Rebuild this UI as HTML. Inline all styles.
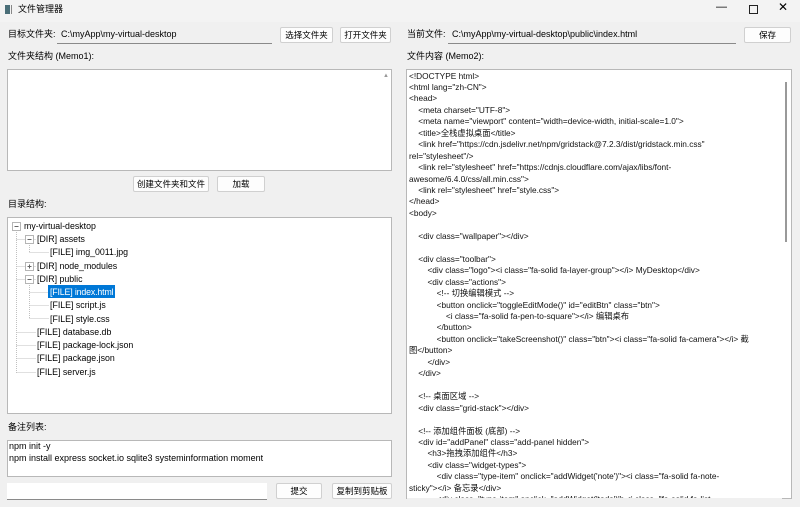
<!DOCTYPE html>
<html><head><meta charset="utf-8"><style>
*{margin:0;padding:0;box-sizing:border-box}
body{width:800px;height:507px;overflow:hidden;background:#f0f0f0;font-family:"Liberation Sans","Noto Sans CJK SC",sans-serif;font-size:9px;color:#000;position:relative}
.a{position:absolute;white-space:pre;line-height:11px}
.edit{position:absolute;background:#f0f0f0;border-bottom:1px solid #8a8a8a;}
.btn{position:absolute;background:#fdfdfd;border:1px solid #d0d0d0;border-radius:2px;text-align:center;line-height:14px;font-size:8.5px}
.box{position:absolute;background:#fff;border:1px solid #b8b8b8}
#code{position:absolute;left:409px;top:70.5px;font-size:8.3px;line-height:11.45px;white-space:pre;color:#111}
.t{position:absolute;font-size:8.8px;white-space:pre;line-height:12px}
</style></head><body>
<div style="position:absolute;left:0;top:0;width:800px;height:22px;background:#f3f3f3"></div>
<div style="position:absolute;left:5px;top:5px;width:5px;height:9px;background:#4a6e78"></div>
<div style="position:absolute;left:11px;top:5px;width:1px;height:9px;background:#888"></div>
<div class="a" style="left:18px;top:4px">文件管理器</div>
<div class="a" style="left:716px;top:2px;font-size:11px">—</div>
<div style="position:absolute;left:749px;top:5px;width:9px;height:9px;border:1px solid #222"></div>
<div class="a" style="left:778px;top:2px;font-size:12px">✕</div>

<div class="a" style="left:8px;top:29px">目标文件夹:</div>
<div class="edit" style="left:57px;top:27px;width:215px;height:17px"></div>
<div class="a" style="left:61px;top:29px">C:\myApp\my-virtual-desktop</div>
<div class="btn" style="left:280px;top:27px;width:53px;height:16px">选择文件夹</div>
<div class="btn" style="left:340px;top:27px;width:51px;height:16px">打开文件夹</div>
<div class="a" style="left:8px;top:51px">文件夹结构 (Memo1):</div>
<div class="box" style="left:7px;top:69px;width:385px;height:102px"></div>
<div class="a" style="left:383px;top:71px;font-size:6px;color:#999">▲</div>
<div class="btn" style="left:133px;top:176px;width:76px;height:16px">创建文件夹和文件</div>
<div class="btn" style="left:217px;top:176px;width:48px;height:16px">加载</div>
<div class="a" style="left:8px;top:199px">目录结构:</div>
<div class="box" style="left:7px;top:217px;width:385px;height:197px"></div>
<svg style="position:absolute;left:0;top:0" width="400" height="420">
<g stroke="#c0c0c0" stroke-dasharray="1 1" fill="none">
<line x1="16.5" y1="230" x2="16.5" y2="373"/>
<line x1="16.5" y1="239.5" x2="36" y2="239.5"/><line x1="16.5" y1="266.5" x2="36" y2="266.5"/><line x1="16.5" y1="279.5" x2="36" y2="279.5"/>
<line x1="16.5" y1="332.5" x2="36" y2="332.5"/><line x1="16.5" y1="345.5" x2="36" y2="345.5"/><line x1="16.5" y1="358.5" x2="36" y2="358.5"/><line x1="16.5" y1="372.5" x2="36" y2="372.5"/>
<line x1="29.5" y1="243" x2="29.5" y2="252.5"/><line x1="29.5" y1="252.5" x2="49" y2="252.5"/>
<line x1="29.5" y1="283" x2="29.5" y2="319"/><line x1="29.5" y1="292.5" x2="49" y2="292.5"/><line x1="29.5" y1="305.5" x2="49" y2="305.5"/><line x1="29.5" y1="318.5" x2="49" y2="318.5"/>
</g>
<g fill="#fff" stroke="#b5b5b5"><rect x="12.5" y="222.5" width="8" height="8"/><rect x="25.5" y="235.5" width="8" height="8"/><rect x="25.5" y="262.5" width="8" height="8"/><rect x="25.5" y="275.5" width="8" height="8"/></g>
<g stroke="#666"><line x1="14.5" y1="226.5" x2="18.5" y2="226.5"/><line x1="27.5" y1="239.5" x2="31.5" y2="239.5"/><line x1="27.5" y1="266.5" x2="31.5" y2="266.5"/><line x1="29.5" y1="264.5" x2="29.5" y2="268.5"/><line x1="27.5" y1="279.5" x2="31.5" y2="279.5"/></g>
</svg>
<div class="t" style="left:24px;top:220px">my-virtual-desktop</div>
<div class="t" style="left:37px;top:233px">[DIR] assets</div>
<div class="t" style="left:50px;top:246px">[FILE] img_0011.jpg</div>
<div class="t" style="left:37px;top:260px">[DIR] node_modules</div>
<div class="t" style="left:37px;top:273px">[DIR] public</div>
<div style="position:absolute;left:48px;top:285px;width:67px;height:13px;background:#0078d7"></div>
<div class="t" style="left:50px;top:286px;color:#fff;letter-spacing:-0.15px">[FILE] index.html</div>
<div class="t" style="left:50px;top:299px">[FILE] script.js</div>
<div class="t" style="left:50px;top:313px">[FILE] style.css</div>
<div class="t" style="left:37px;top:326px">[FILE] database.db</div>
<div class="t" style="left:37px;top:339px">[FILE] package-lock.json</div>
<div class="t" style="left:37px;top:352px">[FILE] package.json</div>
<div class="t" style="left:37px;top:366px">[FILE] server.js</div>

<div class="a" style="left:8px;top:422px">备注列表:</div>
<div class="box" style="left:7px;top:440px;width:385px;height:37px"></div>
<div class="a" style="left:9px;top:441px;line-height:11.5px">npm init -y
npm install express socket.io sqlite3 systeminformation moment</div>
<div style="position:absolute;left:7px;top:483px;width:260px;height:17px;background:#fff;border-bottom:1px solid #8a8a8a"></div>
<div class="btn" style="left:276px;top:483px;width:46px;height:16px">提交</div>
<div class="btn" style="left:332px;top:483px;width:60px;height:16px">复制到剪贴板</div>

<div class="a" style="left:407px;top:29px">当前文件:</div>
<div class="edit" style="left:448px;top:27px;width:288px;height:17px"></div>
<div class="a" style="left:452px;top:29px">C:\myApp\my-virtual-desktop\public\index.html</div>
<div class="btn" style="left:744px;top:27px;width:47px;height:16px">保存</div>
<div class="a" style="left:407px;top:51px">文件内容 (Memo2):</div>
<div class="box" style="left:406px;top:69px;width:376px;height:430px;border-right:none"></div>
<div style="position:absolute;left:782px;top:69px;width:10px;height:430px;background:#fff;border:1px solid #b8b8b8;border-left:none"></div>
<div style="position:absolute;left:785px;top:82px;width:2px;height:160px;background:#999"></div>
<div id="code">&lt;!DOCTYPE html&gt;
&lt;html lang="zh-CN"&gt;
&lt;head&gt;
    &lt;meta charset="UTF-8"&gt;
    &lt;meta name="viewport" content="width=device-width, initial-scale=1.0"&gt;
    &lt;title&gt;全栈虚拟桌面&lt;/title&gt;
    &lt;link href="https://cdn.jsdelivr.net/npm/gridstack@7.2.3/dist/gridstack.min.css"
rel="stylesheet"/&gt;
    &lt;link rel="stylesheet" href="https://cdnjs.cloudflare.com/ajax/libs/font-
awesome/6.4.0/css/all.min.css"&gt;
    &lt;link rel="stylesheet" href="style.css"&gt;
&lt;/head&gt;
&lt;body&gt;

    &lt;div class="wallpaper"&gt;&lt;/div&gt;

    &lt;div class="toolbar"&gt;
        &lt;div class="logo"&gt;&lt;i class="fa-solid fa-layer-group"&gt;&lt;/i&gt; MyDesktop&lt;/div&gt;
        &lt;div class="actions"&gt;
            &lt;!-- 切换编辑模式 --&gt;
            &lt;button onclick="toggleEditMode()" id="editBtn" class="btn"&gt;
                &lt;i class="fa-solid fa-pen-to-square"&gt;&lt;/i&gt; 编辑桌布
            &lt;/button&gt;
            &lt;button onclick="takeScreenshot()" class="btn"&gt;&lt;i class="fa-solid fa-camera"&gt;&lt;/i&gt; 截
图&lt;/button&gt;
        &lt;/div&gt;
    &lt;/div&gt;

    &lt;!-- 桌面区域 --&gt;
    &lt;div class="grid-stack"&gt;&lt;/div&gt;

    &lt;!-- 添加组件面板 (底部) --&gt;
    &lt;div id="addPanel" class="add-panel hidden"&gt;
        &lt;h3&gt;拖拽添加组件&lt;/h3&gt;
        &lt;div class="widget-types"&gt;
            &lt;div class="type-item" onclick="addWidget('note')"&gt;&lt;i class="fa-solid fa-note-
sticky"&gt;&lt;/i&gt; 备忘录&lt;/div&gt;
            &lt;div class="type-item" onclick="addWidget('todo')"&gt;&lt;i class="fa-solid fa-list-</div>
<div style="position:absolute;left:407px;top:498px;width:375px;height:9px;background:#f0f0f0"></div>
</body></html>
